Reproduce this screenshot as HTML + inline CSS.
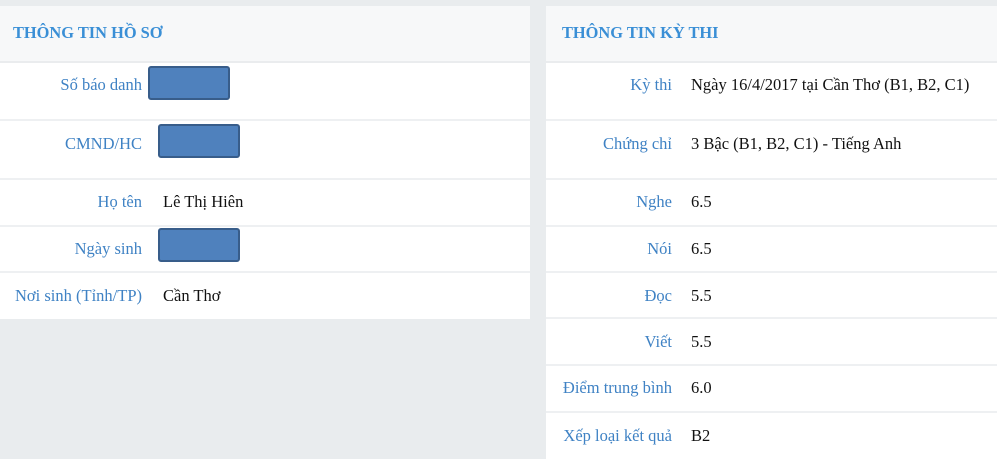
<!DOCTYPE html>
<html><head><meta charset="utf-8"><style>
body{margin:0;width:997px;height:459px;background:#e9ecee;position:relative;overflow:hidden;font-family:"Liberation Serif","Noto Serif CJK SC",serif;font-size:16.5px}
.p{position:absolute;background:#fff}
.h{position:absolute;left:0;right:0;top:0;height:55px;background:#f7f8f9;border-bottom:2px solid #eaecee}
.h span{position:absolute;top:17px;font-weight:bold;color:#3a8fd6;font-size:16.4px}
.r{position:absolute;left:0;right:0;border-bottom:2px solid #eef0f2}
.l{position:absolute;text-align:right;color:#3f82c4;white-space:nowrap}
.v{position:absolute;color:#111;white-space:nowrap}
.b{position:absolute;width:78px;height:30px;background:#4f81bd;border:2px solid #385d8a;border-radius:3px}
</style></head><body>
<div class="p" style="left:0;top:6px;width:530px;height:313px">
 <div class="h"><span style="left:13px">THÔNG TIN HỒ SƠ</span></div>
</div>
<div class="p" style="left:546px;top:6px;width:451px;height:453px">
 <div class="h"><span style="left:16px">THÔNG TIN KỲ THI</span></div>
</div>
<div class="r" style="left:0;width:530px;top:62px;height:57px"></div>
<div class="r" style="left:0;width:530px;top:121px;height:57px"></div>
<div class="r" style="left:0;width:530px;top:180px;height:45px"></div>
<div class="r" style="left:0;width:530px;top:227px;height:44px"></div>
<div class="l" style="right:855px;top:75px">Số báo danh</div>
<div class="b" style="left:148px;top:66px"></div>
<div class="l" style="right:855px;top:134px">CMND/HC</div>
<div class="b" style="left:158px;top:124px"></div>
<div class="l" style="right:855px;top:192px">Họ tên</div>
<div class="v" style="left:163px;top:192px">Lê Thị Hiên</div>
<div class="l" style="right:855px;top:239px">Ngày sinh</div>
<div class="b" style="left:158px;top:228px"></div>
<div class="l" style="right:855px;top:286px">Nơi sinh (Tỉnh/TP)</div>
<div class="v" style="left:163px;top:286px">Cần Thơ</div>
<div class="r" style="left:546px;width:451px;top:62px;height:57px"></div>
<div class="r" style="left:546px;width:451px;top:121px;height:57px"></div>
<div class="r" style="left:546px;width:451px;top:180px;height:45px"></div>
<div class="r" style="left:546px;width:451px;top:227px;height:44px"></div>
<div class="r" style="left:546px;width:451px;top:273px;height:44px"></div>
<div class="r" style="left:546px;width:451px;top:319px;height:45px"></div>
<div class="r" style="left:546px;width:451px;top:366px;height:45px"></div>
<div class="l" style="right:325px;top:75px">Kỳ thi</div>
<div class="v" style="left:691px;top:75px">Ngày 16/4/2017 tại Cần Thơ (B1, B2, C1)</div>
<div class="l" style="right:325px;top:134px">Chứng chỉ</div>
<div class="v" style="left:691px;top:134px">3 Bậc (B1, B2, C1) - Tiếng Anh</div>
<div class="l" style="right:325px;top:192px">Nghe</div>
<div class="v" style="left:691px;top:192px">6.5</div>
<div class="l" style="right:325px;top:239px">Nói</div>
<div class="v" style="left:691px;top:239px">6.5</div>
<div class="l" style="right:325px;top:286px">Đọc</div>
<div class="v" style="left:691px;top:286px">5.5</div>
<div class="l" style="right:325px;top:332px">Viết</div>
<div class="v" style="left:691px;top:332px">5.5</div>
<div class="l" style="right:325px;top:378px">Điểm trung bình</div>
<div class="v" style="left:691px;top:378px">6.0</div>
<div class="l" style="right:325px;top:426px">Xếp loại kết quả</div>
<div class="v" style="left:691px;top:426px">B2</div>
</body></html>
